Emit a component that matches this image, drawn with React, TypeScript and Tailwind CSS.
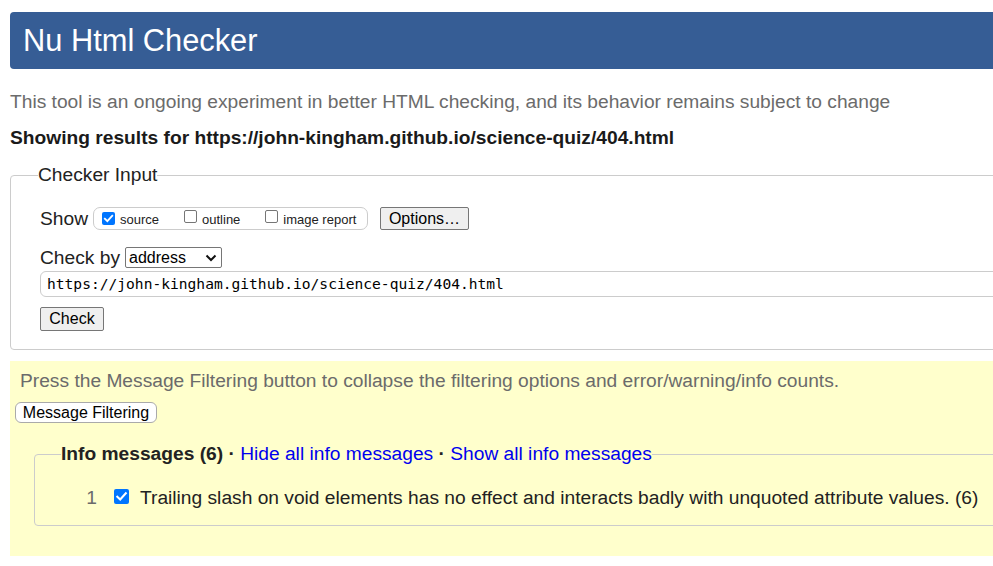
import React from "react";

function Box({ checked, size = 13 }: { checked?: boolean; size?: number }) {
  if (checked) {
    return (
      <span
        className="inline-flex items-center justify-center rounded-[2px] bg-[#0075ff] shrink-0"
        style={{ width: size, height: size }}
      >
        <svg viewBox="0 0 16 16" width={size} height={size}>
          <path d="M3.5 8.2 L6.6 11.2 L12.6 4.6" fill="none" stroke="#fff" strokeWidth="2.2" strokeLinecap="square" />
        </svg>
      </span>
    );
  }
  return (
    <span
      className="inline-block rounded-[2px] border border-[#767676] bg-white shrink-0"
      style={{ width: size, height: size }}
    />
  );
}

export default function App() {
  return (
    <div className="w-[993px] h-[566px] overflow-hidden bg-white" style={{ fontFamily: '"Liberation Sans", Arial, sans-serif' }}>
      <div className="w-[1200px] pl-[10px] pt-[12px] text-[19.2px] text-[#222]">
        <div className="h-[57px] bg-[#365d95] rounded-l-[4px] flex items-center pl-[13px]">
          <h1 className="text-[30.8px] text-white leading-none font-normal mt-[1px]">Nu Html Checker</h1>
        </div>
        <p className="mt-[22px] leading-[22px] text-[#6b6b6b]">
          This tool is an ongoing experiment in better HTML checking, and its behavior remains subject to change
        </p>
        <p className="mt-[14px] leading-[22px] font-bold text-[#1a1a1a]">
          Showing results for https://john-kingham.github.io/science-quiz/404.html
        </p>
        <fieldset className="mt-[15px] border border-[#cccccc] rounded-l-[4px] pl-[27px] pb-[18px]">
          <legend className="leading-[22px] px-0">Checker Input</legend>
          <div className="pl-[2px]">
            <div className="flex items-center h-[23px] mt-[21px]">
              <span className="leading-[22px]">Show</span>
              <div className="ml-[5px] h-[23px] w-[275px] border border-[#cccccc] rounded-[7px] flex items-center pl-[8px] text-[13px]">
                <Box checked />
                <span className="ml-[5px] mt-[3px]">source</span>
                <span className="ml-[25px]"><Box /></span>
                <span className="ml-[5px] mt-[3px]">outline</span>
                <span className="ml-[25px]"><Box /></span>
                <span className="ml-[5px] mt-[3px]">image report</span>
              </div>
              <button className="ml-[12px] h-[23px] w-[89px] bg-[#efefef] border border-[#767676] rounded-[2px] text-[16px] leading-none text-black flex items-center justify-center">
                Options…
              </button>
            </div>
            <div className="flex items-center h-[21px] mt-[17px]">
              <span className="leading-[22px]">Check by</span>
              <div className="ml-[5px] h-[21px] w-[97px] border border-[#767676] rounded-[2px] bg-white flex items-center pl-[3px] pr-[4px] text-[16px] text-black">
                <span className="flex-1 leading-none">address</span>
                <svg width="12" height="8" viewBox="0 0 12 8">
                  <path d="M1.5 1.5 L6 6 L10.5 1.5" fill="none" stroke="#111" strokeWidth="2" />
                </svg>
              </div>
            </div>
            <div className="mt-[3px] h-[26px] border border-[#cccccc] rounded-l-[6px] bg-white flex items-center pl-[6px] text-[14.6px] text-black" style={{ fontFamily: '"DejaVu Sans Mono", "Liberation Mono", monospace' }}>
              https://john-kingham.github.io/science-quiz/404.html
            </div>
            <button className="mt-[10px] h-[24px] w-[64px] bg-[#efefef] border border-[#767676] rounded-[2px] text-[16px] leading-none text-black flex items-center justify-center">
              Check
            </button>
          </div>
        </fieldset>
        <div className="mt-[11px] bg-[#ffffcc] pt-[9px] pb-[30px]">
          <p className="pl-[10px] leading-[22px] text-[#6b6b6b]">
            Press the Message Filtering button to collapse the filtering options and error/warning/info counts.
          </p>
          <button className="ml-[5px] mt-[10px] h-[21px] w-[142px] bg-white border border-[#aaaaaa] rounded-[6px] text-[16px] leading-none text-black flex items-center justify-center">
            Message Filtering
          </button>
          <fieldset className="ml-[24px] mt-[20px] border border-[#cccccc] rounded-l-[4px] pl-[26px] pb-[16px]">
            <legend className="leading-[22px] px-0">
              <span className="font-bold">Info messages (6)</span>
              <span className="font-bold"> · </span>
              <span className="text-[#0000ee]">Hide all info messages</span>
              <span className="font-bold"> · </span>
              <span className="text-[#0000ee]">Show all info messages</span>
            </legend>
            <div className="flex items-center h-[22px] mt-[22px]">
              <span className="w-[36px] text-right text-[#6b6b6b]">1</span>
              <span className="ml-[17px]"><Box checked size={15} /></span>
              <span className="ml-[11px]">Trailing slash on void elements has no effect and interacts badly with unquoted attribute values. (6)</span>
            </div>
          </fieldset>
        </div>
      </div>
    </div>
  );
}
